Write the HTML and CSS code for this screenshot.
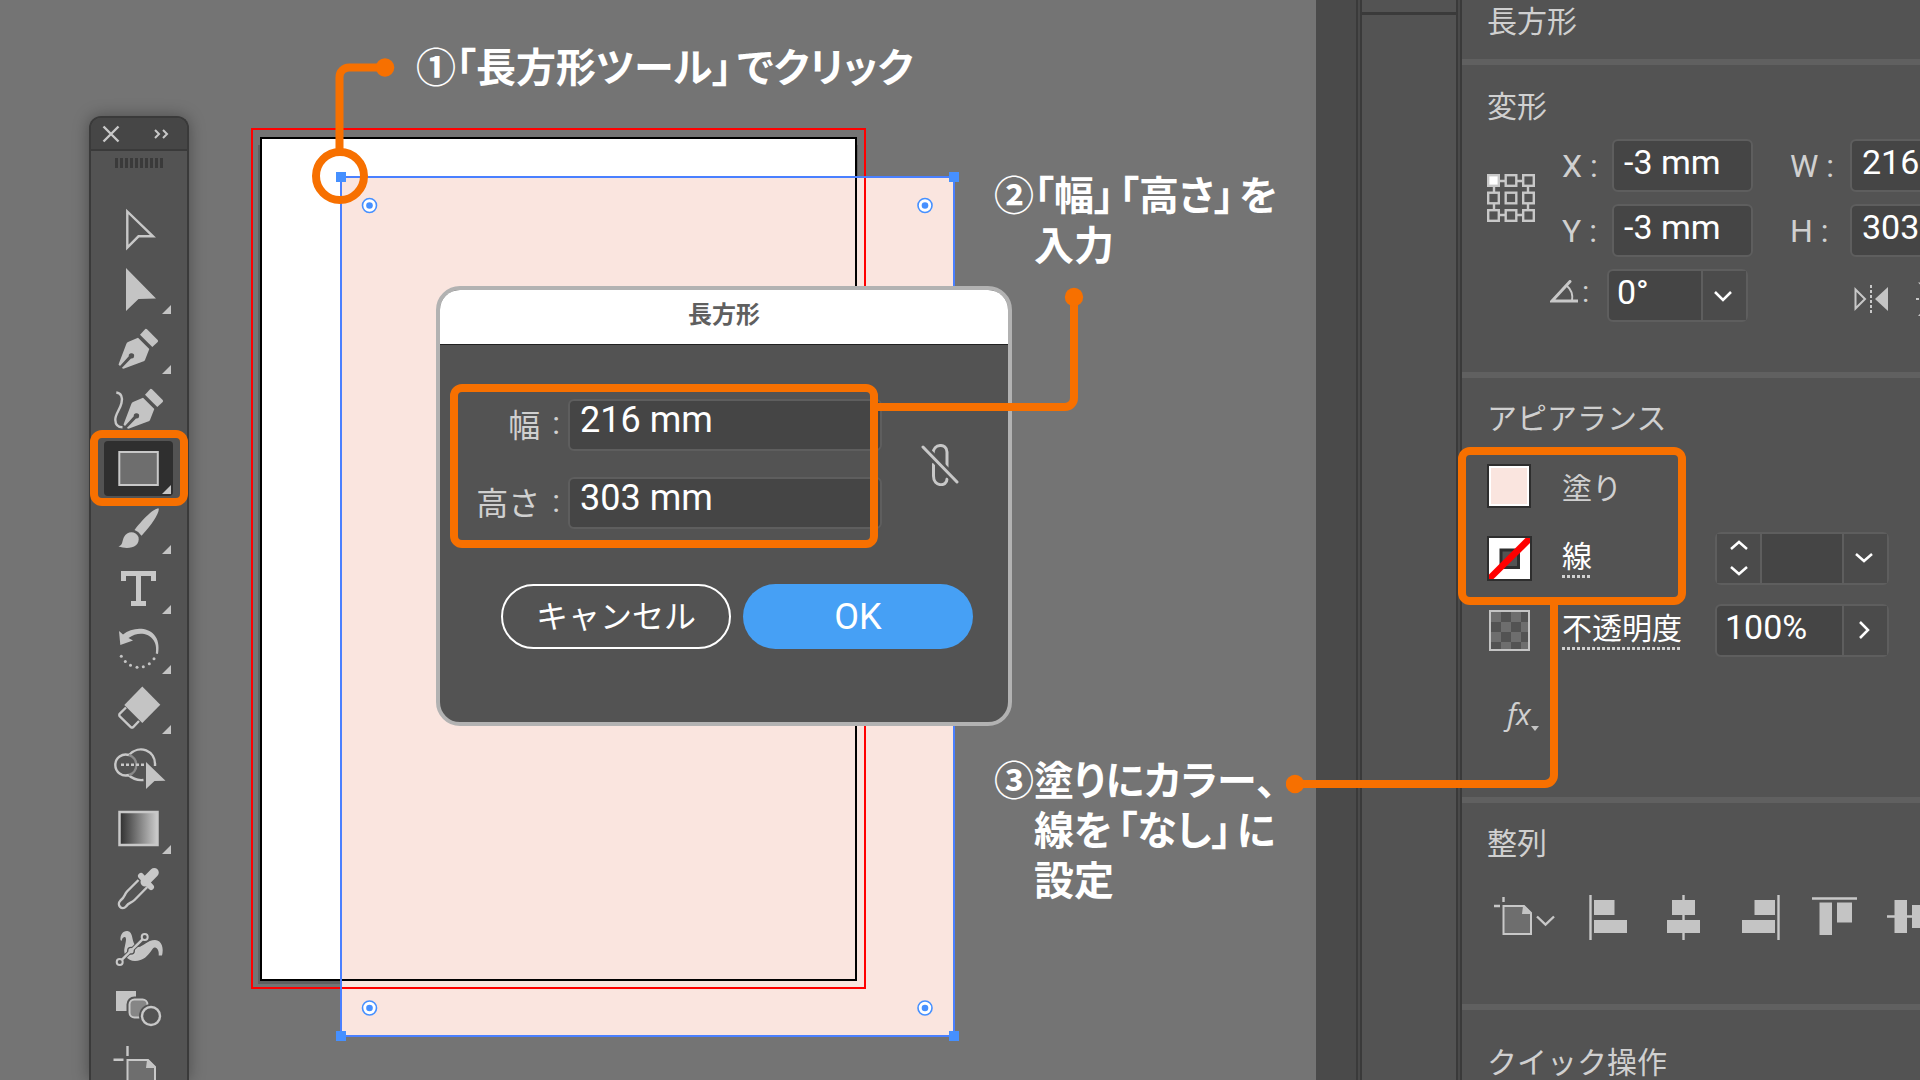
FILE: index.html
```html
<!DOCTYPE html>
<html lang="ja">
<head>
<meta charset="utf-8">
<title>長方形ツール</title>
<link rel="stylesheet" href="styles.css">
</head>
<body>
<main class="canvas">
  <svg class="artwork" width="724" height="924" viewBox="244 122 724 924" aria-hidden="true">
    <rect x="258" y="145" width="600" height="839" fill="#5f5f5f"/>
    <rect x="261" y="138" width="595" height="842" fill="#fff"/>
    <rect x="341" y="177" width="613" height="859" fill="#fae5df"/>
    <g fill="none" stroke-width="2">
      <rect x="261" y="138" width="595" height="842" stroke="#000"/>
      <rect x="252" y="129" width="613" height="859" stroke="#f00"/>
      <rect x="341" y="177" width="613" height="859" stroke="#4a80ff"/>
    </g>
    <g fill="#4690ff">
      <rect x="336" y="172" width="10" height="10"/><rect x="949" y="172" width="10" height="10"/>
      <rect x="336" y="1031" width="10" height="10"/><rect x="949" y="1031" width="10" height="10"/>
    </g>
    <g fill="#fff" stroke="#4690ff" stroke-width="1.6">
      <circle cx="369.500" cy="205.500" r="7"/><circle cx="925" cy="205.500" r="7"/>
      <circle cx="369.500" cy="1008" r="7"/><circle cx="925" cy="1008" r="7"/>
    </g>
    <g fill="#4690ff">
      <circle cx="369.500" cy="205.500" r="3.300"/><circle cx="925" cy="205.500" r="3.300"/>
      <circle cx="369.500" cy="1008" r="3.300"/><circle cx="925" cy="1008" r="3.300"/>
    </g>
  </svg>

  <svg class="connector click-point" width="90" height="150" viewBox="308 56 90 150" aria-hidden="true">
    <path d="M385 67.500H349a9.500 9.500 0 0 0-9.500 9.500V150" class="wire"/>
    <circle cx="340" cy="176" r="24" class="wire"/>
    <circle cx="385" cy="67.500" r="9.300" class="dot"/>
  </svg>
  <p class="callout callout-click">①「長方形ツール」<span class="after">でクリック</span></p>
  <p class="callout callout-size">②「幅」<span class="after">「高さ」</span><span class="after">を</span><br><span class="indent">入力</span></p>
  <p class="callout callout-color">③塗りにカラー、<br><span class="indent">線を<span class="after">「なし」</span><span class="after">に</span></span><br><span class="indent">設定</span></p>

  <aside class="toolbar" aria-label="ツール">
    <header class="toolbar-head">
      <button class="head-btn" aria-label="閉じる"><svg width="18" height="18" viewBox="0 0 18 18"><path d="M1.500 1.500l15 15M16.500 1.500l-15 15" class="line"/></svg></button>
      <button class="head-btn" aria-label="展開"><svg width="16" height="12" viewBox="0 0 16 12"><path d="M2 2l4 4-4 4M10 2l4 4-4 4" class="line thin"/></svg></button>
    </header>
    <div class="grip"></div>
    <div class="tools">
      <button class="tool" aria-label="選択"><svg viewBox="-2 0 70 60"><path d="M22.300 13.500V49.500L33.500 38.300H48Z" class="line"/></svg></button>
      <button class="tool" aria-label="ダイレクト選択"><svg viewBox="-2 0 70 60"><path d="M21 10V53L33.500 41 51 40.500Z" class="fill"/><path d="M57 56H66V47Z" class="fill"/></svg></button>
      <button class="tool" aria-label="ペン"><svg viewBox="-2 0 70 60"><g id="nib"><path d="M40.300 11Q41 10.500 42 11.300L52.700 22Q53.500 23 52.700 24L47.300 29 35 16.700Z" class="fill"/><path d="M33 19.800 44.300 31 40 42 Q39.500 43 38 43.500L18.500 50.700 16.800 50 26 40.500A2.700 2.700 0 1 0 23.800 38.300L15 47.900 13.500 46.500 21.300 26Q21.800 24.500 23 24Z" class="fill"/></g><path d="M57 56H66V47Z" class="fill"/></svg></button>
      <button class="tool" aria-label="曲線"><svg viewBox="-2 0 70 60"><use href="#nib" x="5"/><path d="M11.300 14.500C16 15 18 19 16.500 25C15 32 10 36 10.300 42C10.500 47 13.500 49.300 17.500 49.300" class="line"/></svg></button>
      <button class="tool selected" aria-label="長方形"><svg viewBox="-2 0 70 60"><rect x="14.300" y="14" width="38.500" height="33" fill="#6e6e6e" stroke="#c8c8c8" stroke-width="2"/><path d="M57 56H66V47Z" class="fill"/></svg></button>
      <button class="tool" aria-label="ブラシ"><svg viewBox="-2 0 70 60"><path d="M53.800 10.500C54.500 15 46 28 36.500 37.700Q34 33.500 29.500 32C37 22 49 9.500 53.800 10.500Z" class="fill"/><path d="M13.500 48.500C18 47 17 43 19 39C22 32.500 31 32.500 33.500 39C35.500 49 24 52 13.500 48.500Z" class="fill"/><path d="M57 56H66V47Z" class="fill"/></svg></button>
      <button class="tool" aria-label="文字"><svg viewBox="-2 0 70 60"><path d="M18.500 23V15.500H48.500V23M33.500 15.500V45.500M26 45.500H41" class="line thick"/><path d="M57 56H66V47Z" class="fill"/></svg></button>
      <button class="tool" aria-label="回転"><svg viewBox="-2 0 70 60"><path d="M14 13L18 16.500C31 5.500 58 9 53 36L50.800 35.500C54 17 36 10.500 23.500 20L28 22.500 15.300 27Z" class="fill"/><g class="fill"><circle cx="16.300" cy="38.300" r="1.500"/><circle cx="20.300" cy="43.500" r="1.500"/><circle cx="25.500" cy="47.300" r="1.500"/><circle cx="32" cy="49.300" r="1.500"/><circle cx="38.300" cy="48.700" r="1.500"/><circle cx="44.300" cy="45.700" r="1.500"/><circle cx="49" cy="40.700" r="1.500"/></g><path d="M57 56H66V47Z" class="fill"/></svg></button>
      <button class="tool" aria-label="消しゴム"><svg viewBox="-2 0 70 60"><path d="M37.300 8.500 55.300 26.700 37.300 45 19.300 27Z" class="fill"/><path d="M21 29.500 14.500 36Q14 37 14.500 38L26 49.300Q27 50 28 49.300L34 43" class="line"/><path d="M57 56H66V47Z" class="fill"/></svg></button>
      <button class="tool" aria-label="シェイプ形成"><svg viewBox="-2 0 70 60"><path d="M24 17C34 6 51 12 50 28M23.500 37Q30 43 38.500 42" class="line"/><path d="M24 17A10.500 10.500 0 1 0 24 37" class="line"/><path d="M24 17A10.500 10.500 0 0 1 24 37" class="line dim"/><path d="M16 26.700H39" class="line dots"/><path d="M41 24V51L49.500 43 60.500 42.800Z" class="fill"/></svg></button>
      <button class="tool" aria-label="グラデーション"><svg viewBox="-2 0 70 60"><defs><linearGradient id="ramp"><stop stop-color="#2e2e2e"/><stop offset="1" stop-color="#ccc"/></linearGradient></defs><rect x="14.500" y="14" width="38" height="33" fill="url(#ramp)" stroke="#c8c8c8" stroke-width="2.500"/><path d="M57 56H66V47Z" class="fill"/></svg></button>
      <button class="tool" aria-label="スポイト"><svg viewBox="-2 0 70 60"><path d="M33.500 22 22 33.500C19 37 20 39 15.500 42.500C11 47 17 53 21 48.500C24 44 26 45.500 29.500 42L42.300 29" class="line"/><path d="M49.300 14.500 40 24" class="line bulb"/><path d="M36 18 46 29" class="line collar"/></svg></button>
      <button class="tool" aria-label="パペットワープ"><svg viewBox="-2 0 70 60"><path d="M15.500 22C15 17 18 12.500 22.500 13C29 14 26 24 31 28C36 32 41 22 50 22C57 22 59 31 57 37.500L53.700 37.500C54.500 32 51 27 47.500 31C43 38 38 43 30 43C22 43 18 36 19.500 30C20.500 25 22 20 20 19C18 18.500 17 21 16.500 23Z" class="fill"/><circle cx="26" cy="32.700" r="5" class="line hole"/><path d="M16.500 42 37.500 21.500" stroke="#535353" stroke-width="4.500"/><path d="M17 41.700 37.500 21.300" class="line"/><circle cx="14.700" cy="44" r="3" class="line hole"/><circle cx="39.700" cy="19" r="3" class="line hole"/><circle cx="26" cy="32.700" r="2.600" class="fill"/></svg></button>
      <button class="tool" aria-label="ブレンド"><svg viewBox="-2 0 70 60"><path d="M11 13H31V33H11Z" class="fill"/><rect x="24.500" y="21.500" width="18" height="18" rx="5" fill="#868686" stroke="#535353" stroke-width="6"/><rect x="24.500" y="21.500" width="18" height="18" rx="5" fill="#868686" class="edge"/><circle cx="46" cy="38" r="9" fill="#535353" stroke="#535353" stroke-width="6"/><circle cx="46" cy="38" r="9" class="line"/></svg></button>
      <button class="tool" aria-label="アートボード"><svg viewBox="-2 0 70 60"><path d="M22.500 22H43L50 29V60H22.500Z" fill="#6e6e6e" class="edge"/><path d="M42 22 50.500 30H41Z" class="fill"/><path d="M22.500 8V18M8.500 21.700H18.500" class="line"/></svg></button>
    </div>
  </aside>

  <form class="dialog">
    <h2 class="dialog-title">長方形</h2>
    <div class="dialog-body">
      <div class="size-row">
        <div class="size-fields">
          <label for="dw"><span>幅</span><span>:</span></label><input id="dw" class="field" value="216 mm">
          <label for="dh"><span>高さ</span><span>:</span></label><input id="dh" class="field" value="303 mm">
          <svg class="connector size-wire" width="210" height="140" viewBox="876 284 210 140" aria-hidden="true"><path d="M876 407H1065A9 9 0 0 0 1074 398V297" class="wire"/><circle cx="1074" cy="297" r="9.200" class="dot"/></svg>
        </div>
        <button type="button" class="link-btn" aria-label="縦横比を固定"><svg width="38" height="42" viewBox="0 0 38 42"><path d="M12 10C12 -1 26 -1 26 8V23M12.500 20V32C12.500 43 26 43 26 35" class="line link"/><path d="M2 3 36 38" stroke="#535353" stroke-width="8"/><path d="M2 3 36 38" class="line link"/></svg></button>
      </div>
      <div class="actions">
        <button type="button" class="pill">キャンセル</button>
        <button type="button" class="pill primary">OK</button>
      </div>
    </div>
  </form>
</main>

<div class="dock"></div>
<div class="rail"><div class="rail-tab"></div></div>

<aside class="panel">
  <section class="sec sec-name"><h2>長方形</h2></section>

  <section class="sec sec-transform">
    <h2>変形</h2>
    <div class="xywh">
      <svg class="refpoint" width="48" height="48" viewBox="0 0 48 48"><g fill="none" stroke="#c8c8c8" stroke-width="2.400"><path d="M12 7H18M30 7H36M12 41H18M30 41H36M7 12V18M7 30V36M41 12V18M41 30V36"/><rect x="1.200" y="1.200" width="10.600" height="10.600" fill="#fff"/><rect x="18.700" y="1.200" width="10.600" height="10.600"/><rect x="36.200" y="1.200" width="10.600" height="10.600"/><rect x="1.200" y="18.700" width="10.600" height="10.600"/><rect x="18.700" y="18.700" width="10.600" height="10.600"/><rect x="36.200" y="18.700" width="10.600" height="10.600"/><rect x="1.200" y="36.200" width="10.600" height="10.600"/><rect x="18.700" y="36.200" width="10.600" height="10.600"/><rect x="36.200" y="36.200" width="10.600" height="10.600"/></g></svg>
      <label for="px">X :</label><input id="px" class="field" value="-3 mm">
      <label for="pw" class="second">W :</label><input id="pw" class="field" value="216 mm">
      <label for="py">Y :</label><input id="py" class="field" value="-3 mm">
      <label for="ph" class="second">H :</label><input id="ph" class="field" value="303 mm">
    </div>
    <div class="rotate-row">
      <label for="pa" class="angle" aria-label="角度"><svg width="28" height="24" viewBox="0 0 28 24"><path d="M20 1.500 2 21H28" class="line link"/><path d="M17 6C22 10 23 15 22 21" class="line thin"/></svg><span>:</span></label>
      <div class="combo angle-combo"><input id="pa" value="0°"><button aria-label="角度の候補"><svg width="20" height="12" viewBox="0 0 20 12"><path d="M2 2l8 8 8-8" class="chev"/></svg></button></div>
      <button class="flip" aria-label="左右に反転"><svg width="34" height="34" viewBox="0 -3 34 34"><path d="M1.500 4.500V23.500L11 14Z" class="line thin"/><path d="M34 2V26L21 14Z" class="fill"/><path d="M17 0V28" class="line dash"/></svg></button>
      <button class="flip" aria-label="上下に反転"><svg width="28" height="34" viewBox="0 0 28 34"><path d="M4.500 1.500H23.500L14 11Z" class="line thin"/><path d="M2 34H26L14 21Z" class="fill"/><path d="M0 17H28" class="line dash"/></svg></button>
    </div>
  </section>

  <section class="sec sec-appearance">
    <h2>アピアランス</h2>
    <div class="paint">
      <div class="row"><button class="swatch fill-swatch" aria-label="塗りのカラー"></button><span class="row-label plain">塗り</span></div>
      <div class="row">
        <button class="swatch none-swatch" aria-label="線のカラー"><svg width="46" height="46" viewBox="0 0 46 46"><rect x="1" y="1" width="43" height="43" fill="#fff" stroke="#2e2e2e" stroke-width="2"/><rect x="14" y="14" width="17.500" height="17.500" fill="#535353" stroke="#2e2e2e" stroke-width="3"/><path d="M2 38.500V43H6.500L43 7V2H38.500Z" fill="#f00"/></svg></button>
        <label for="stroke" class="row-label linked">線</label>
        <div class="combo wide">
          <div class="spin"><button aria-label="増やす"><svg width="20" height="12" viewBox="0 0 20 12"><path d="M2 10l8-7 8 7" class="chev"/></svg></button><button aria-label="減らす"><svg width="20" height="12" viewBox="0 0 20 12"><path d="M2 2l8 7 8-7" class="chev"/></svg></button></div>
          <input id="stroke" value=""><button aria-label="線幅の候補"><svg width="20" height="12" viewBox="0 0 20 12"><path d="M2 2l8 7 8-7" class="chev"/></svg></button>
        </div>
      </div>
      <svg class="connector paint-wire" width="280" height="200" viewBox="1286 600 280 200" aria-hidden="true"><path d="M1554 602V775A9 9 0 0 1 1545 784H1295" class="wire"/><circle cx="1295" cy="784" r="9.200" class="dot"/></svg>
    </div>
    <div class="row">
      <button class="swatch checker" aria-label="不透明マスク"></button>
      <label for="opacity" class="row-label linked">不透明度</label>
      <div class="combo wide"><input id="opacity" value="100%"><button aria-label="不透明度スライダー"><svg width="12" height="20" viewBox="0 0 12 20"><path d="M2 2l8 8-8 8" class="chev"/></svg></button></div>
    </div>
    <button class="fx" aria-label="効果"><span>fx</span><svg width="8" height="6" viewBox="0 0 8 6"><path d="M0 0H8L4 5Z" class="fill"/></svg></button>
  </section>

  <section class="sec sec-align">
    <h2>整列</h2>
    <div class="align-row">
      <button class="align-to" aria-label="整列対象"><svg width="62" height="45" viewBox="0 0 62 45"><path d="M9.500 11H30L37 18V39H9.500Z" fill="#6e6e6e" class="edge"/><path d="M29 11 38 19H28Z" class="fill"/><path d="M9.500 2V7M0 11H6" class="line"/><path d="M43 21.500l8.500 8 8.500-8" class="line"/></svg></button>
      <button aria-label="左揃え"><svg width="45" height="45" viewBox="0 0 45 45"><path d="M3.500 0V45" class="line"/><path d="M7 5H27.500V20H7ZM7 25H40V38H7Z" class="fill"/></svg></button>
      <button aria-label="中央揃え"><svg width="45" height="45" viewBox="0 0 45 45"><path d="M21.500 0V45" class="line"/><path d="M10 5H33V20H10ZM5 25H38V38H5Z" class="fill"/></svg></button>
      <button aria-label="右揃え"><svg width="45" height="45" viewBox="0 0 45 45"><path d="M41.500 0V45" class="line"/><path d="M17.500 5H38V20H17.500ZM5 25H38V38H5Z" class="fill"/></svg></button>
      <button aria-label="上揃え"><svg width="45" height="45" viewBox="0 0 45 45"><path d="M0 3.500H45" class="line"/><path d="M7.500 7.500H20V40H7.500ZM25 7.500H40V27.500H25Z" class="fill"/></svg></button>
      <button aria-label="垂直中央揃え"><svg width="45" height="45" viewBox="0 0 45 45"><path d="M0 21.500H45" class="line"/><path d="M7.500 5H20V38H7.500ZM25 10H40V33H25Z" class="fill"/></svg></button>
    </div>
  </section>

  <section class="sec sec-quick"><h2>クイック操作</h2></section>
</aside>
</body>
</html>
```
FILE: styles.css
```css
*, *::before, *::after { box-sizing: border-box; }

body {
  margin: 0;
  height: 100vh;
  display: flex;
  overflow: hidden;
  background: #747474;
  color: #d0d0d0;
  font-family: Roboto, "Noto Sans CJK JP", sans-serif;
  font-size: 30px;
}

h2, p { margin: 0; }

button {
  padding: 0;
  border: 0;
  background: none;
  color: inherit;
  font: inherit;
}

input {
  min-width: 0;
  border: 0;
  color: #fff;
  font: inherit;
  font-size: 34px;
}

svg { display: block; }

/* icon strokes */
.line { fill: none; stroke: #c8c8c8; stroke-width: 2.4; }
.line.thin { stroke-width: 2; }
.line.thick { stroke-width: 5; }
.line.link { stroke-width: 3; stroke-linecap: round; }
.line.bulb { stroke-width: 9; stroke-linecap: round; }
.line.collar { stroke-width: 6; stroke-linecap: round; }
.line.dim { stroke: #8a8a8a; }
.line.dots { stroke-dasharray: 3 2; }
.line.dash { stroke-width: 2; stroke-dasharray: 3 2; }
.line.hole { fill: #535353; stroke-width: 2; }
.edge { stroke: #c8c8c8; stroke-width: 2; }
.fill { fill: #c4c4c4; }
.chev { fill: none; stroke: #fff; stroke-width: 2.5; }

/* canvas */
.canvas {
  position: relative;
  flex: 1;
  min-width: 0;
}

.artwork { position: absolute; left: 244px; top: 122px; }

.connector { position: absolute; z-index: 3; pointer-events: none; }
.wire { fill: none; stroke: #f77000; stroke-width: 8; }
.dot { fill: #f77000; }
.click-point { left: 308px; top: 56px; }

.callout {
  position: absolute;
  color: #fff;
  font-family: "Noto Sans CJK JP", sans-serif;
  font-size: 40px;
  font-weight: 700;
  line-height: 50px;
  white-space: nowrap;
  font-feature-settings: "palt";
}
.callout-click { left: 416px; top: 40px; }
.callout-size { left: 994px; top: 168px; }
.callout-color { left: 994px; top: 753px; }
.indent { margin-left: 40px; }
.after { margin-left: 5px; }

/* tool palette */
.toolbar {
  position: absolute;
  left: 89px;
  top: 116px;
  bottom: 0;
  width: 100px;
  border: solid #3a3a3a;
  border-width: 2px 2px 0;
  border-radius: 12px 12px 0 0;
  background: #535353;
  box-shadow: 0 0 16px rgba(0, 0, 0, .35);
}
.toolbar-head {
  display: flex;
  align-items: center;
  justify-content: space-between;
  height: 33px;
  padding: 0 18px 0 11px;
  border-bottom: 2px solid #3a3a3a;
  border-radius: 10px 10px 0 0;
  background: #464646;
}
.grip {
  width: 48px;
  height: 10px;
  margin: 7px auto 30px;
  background: repeating-linear-gradient(90deg, #3a3a3a 0 3px, transparent 3px 5px);
}
.tools { padding: 0 12px; }
.tool { position: relative; display: block; width: 70px; height: 60px; }
.tool svg { position: relative; width: 70px; height: 60px; }
.tool.selected::before {
  content: "";
  position: absolute;
  inset: 3px 0 2px 1px;
  border-radius: 4px;
  background: #2f2f2f;
}
.tool.selected::after {
  content: "";
  position: absolute;
  z-index: 2;
  inset: -8px -15px -8px -13px;
  border: 8px solid #f77000;
  border-radius: 12px;
}

/* dialog */
.dialog {
  position: absolute;
  left: 436px;
  top: 286px;
  width: 576px;
  border: 4px solid #b2b2b2;
  border-radius: 24px;
  background: #535353;
}
.dialog-title {
  height: 55px;
  border-bottom: 1px solid #222;
  border-radius: 20px 20px 0 0;
  background: #fff;
  color: #5f5f5f;
  font-size: 24px;
  font-weight: 700;
  line-height: 50px;
  text-align: center;
}
.dialog-body { padding: 39px 35px 73px 10px; }
.size-row { display: flex; align-items: center; justify-content: space-between; padding-right: 14px; }
.size-fields {
  position: relative;
  display: grid;
  grid-template-columns: 112px 314px;
  grid-auto-rows: 52px;
  row-gap: 26px;
  column-gap: 6px;
  padding: 15px 0 20px;
}
.size-fields::after {
  content: "";
  position: absolute;
  left: 0;
  top: 0;
  width: 428px;
  height: 164px;
  border: 8px solid #f77000;
  border-radius: 12px;
}
.size-fields label {
  display: flex;
  align-items: center;
  justify-content: flex-end;
  gap: 12px;
  padding: 0 2px 4px 0;
  font-size: 32px;
}
.size-wire { left: 426px; top: -100px; }
.field {
  padding: 0 10px 7px;
  border: 2px solid #5e5e5e;
  border-radius: 6px;
  background: #454545;
}
.dialog .field { padding-bottom: 10px; font-size: 36px; }
.link-btn { padding-bottom: 4px; }
.actions { display: flex; justify-content: flex-end; gap: 12px; margin-top: 35px; }
.pill {
  width: 230px;
  height: 65px;
  padding-bottom: 5px;
  border: 2px solid #fff;
  border-radius: 33px;
  color: #fff;
  font-size: 32px;
}
.pill.primary { padding: 0; border: 0; background: #46a0f5; font-size: 36px; }

/* docked columns */
.dock { flex: 0 0 40px; background: #4a4a4a; }
.rail {
  flex: 0 0 106px;
  border: solid #3a3a3a;
  border-width: 0 2px;
  background: #535353;
}
.rail-tab {
  height: 100%;
  margin: 0 2px;
  border: solid #3a3a3a;
  border-width: 0 2px;
  background: linear-gradient(#3a3a3a, #3a3a3a) 0 12px / 100% 3px no-repeat;
  box-shadow: 0 0 0 2px #4a4a4a;
}

/* properties panel */
.panel { position: relative; flex: 0 0 458px; min-width: 0; background: #535353; }
.sec { padding-left: 25px; border-bottom: 6px solid #606060; }
.sec h2 { font-size: 30px; font-weight: 400; line-height: 42px; }
.sec-name { padding-top: 1px; padding-bottom: 16px; }
.sec-transform { padding-top: 21px; padding-bottom: 50px; overflow: hidden; }
.sec-appearance { padding-top: 20px; padding-bottom: 44px; }
.sec-align { padding-top: 20px; padding-bottom: 64px; }
.sec-quick { padding-top: 32px; border: 0; }

.xywh {
  display: grid;
  grid-template-columns: 75px 50px 141px 97px 141px;
  grid-auto-rows: 53px;
  row-gap: 12px;
  align-items: stretch;
  margin-top: 11px;
}
.refpoint { grid-row: span 2; align-self: center; }
.xywh label { align-self: center; font-size: 32px; }
.second { padding-left: 37px; }

.rotate-row { display: flex; align-items: center; margin-top: 12px; padding-left: 63px; }
.angle { display: flex; flex: 0 0 57px; align-items: center; gap: 4px; padding-bottom: 8px; }
.combo {
  display: flex;
  min-width: 0;
  height: 53px;
  border: 2px solid #5e5e5e;
  border-radius: 6px;
  background: #454545;
}
.combo input { flex: 1; width: 0; padding: 0 8px 7px; background: none; }
.combo > button, .spin {
  display: flex;
  flex: 0 0 45px;
  align-items: center;
  justify-content: center;
  border-left: 2px solid #5e5e5e;
  background: #4b4b4b;
}
.combo > button { padding-right: 3px; }
.combo .spin { flex-direction: column; gap: 14px; border-left: 0; border-right: 2px solid #5e5e5e; }
.angle-combo { flex: 0 0 141px; margin-right: 106px; }
.flip { flex: none; margin-right: 28px; padding-top: 6px; }

.paint { position: relative; margin-top: 10px; }
.paint::after {
  content: "";
  position: absolute;
  left: -29px;
  top: -3px;
  width: 228px;
  height: 158px;
  border: 8px solid #f77000;
  border-radius: 12px;
  pointer-events: none;
}
.paint-wire { left: -201px; top: 150px; }
.row { display: grid; grid-template-columns: 75px 153px 174px; align-items: center; height: 72px; }
.row-label { justify-self: start; line-height: 36px; }
.row-label.plain { padding-top: 5px; }
.linked {
  padding-bottom: 3px;
  color: #fff;
  background: repeating-linear-gradient(90deg, #d0d0d0 0 3px, transparent 3px 5px) bottom / 100% 3px no-repeat;
}
.swatch { width: 44px; height: 44px; }
.fill-swatch { border: 2px solid #2e2e2e; background: #fae5df; box-shadow: inset 0 0 0 2px #fff; }
.checker {
  width: 41px;
  height: 41px;
  margin-left: 2px;
  border: 2px solid #c4c4c4;
  background: repeating-conic-gradient(#535353 0 25%, #6e6e6e 0 50%) 0 0 / 20px 20px;
}
.fx { display: flex; align-items: flex-end; height: 72px; margin-top: 15px; padding: 0 0 21px 20px; }
.fx span { font-family: "Open Sans", sans-serif; font-size: 30px; font-style: italic; line-height: 36px; }

.align-row { display: flex; gap: 30px; margin-top: 30px; overflow: hidden; }
.align-row button { flex: none; }
.align-row .align-to { margin-left: 7px; margin-right: 1px; }
```
